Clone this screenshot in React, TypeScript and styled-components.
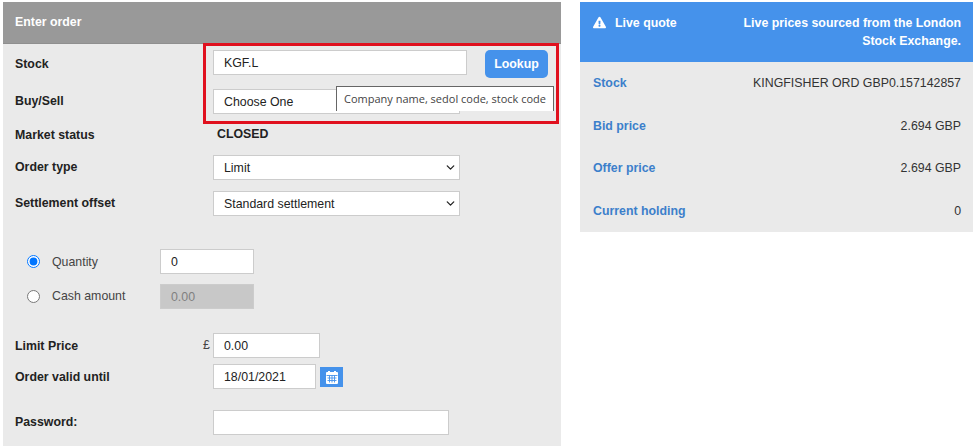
import React from "react";
import styled, { createGlobalStyle } from "styled-components";
import { ChevronDown } from "lucide-react";
import { FaExclamationTriangle } from "react-icons/fa";

const GlobalStyle = createGlobalStyle`
    html, body {
        margin: 0;
        padding: 0;
        background: #fff;
        font-family: "Liberation Sans", Arial, sans-serif;
    }
`;

const quoteRows = [
    { label: "Stock", value: "KINGFISHER ORD GBP0.157142857" },
    { label: "Bid price", value: "2.694 GBP" },
    { label: "Offer price", value: "2.694 GBP" },
    { label: "Current holding", value: "0" },
];

function CalendarIcon() {
    return (
        <svg width="14" height="15" viewBox="0 0 14 15" aria-hidden="true">
            <path d="M2 2h1V1h2v1h4V1h2v1h1a1 1 0 0 1 1 1v10a1 1 0 0 1-1 1H2a1 1 0 0 1-1-1V3a1 1 0 0 1 1-1z" fill="#fff" />
            <path d="M1.5 5.5h11M2.5 8h9M2.5 10.5h9M4.5 5.5v7M7 5.5v7M9.5 5.5v7" stroke="#4592eb" strokeWidth="0.9" fill="none" />
        </svg>
    );
}

function SelectField({ value }: { value: string }) {
    return (
        <SelectBox>
            <Select>
                <option>{value}</option>
            </Select>
            <SelectArrow size={13} strokeWidth={2.4} />
        </SelectBox>
    );
}

export default function App() {
    return (
        <Page>
            <GlobalStyle />
            <OrderPanel>
                <OrderHeader>Enter order</OrderHeader>
                <OrderBody>
                    <Row $top={6} $height={28}>
                        <Label $offset={7}>Stock</Label>
                        <TextInput $width={254} defaultValue="KGF.L" />
                        <LookupButton>Lookup</LookupButton>
                    </Row>
                    <Row $top={11} $height={25}>
                        <Label>Buy/Sell</Label>
                        <SelectField value="Choose One" />
                    </Row>
                    <Row $top={12} $height={16}>
                        <Label $offset={2}>Market status</Label>
                        <StatusText>CLOSED</StatusText>
                    </Row>
                    <Row $top={13} $height={25}>
                        <Label>Order type</Label>
                        <SelectField value="Limit" />
                    </Row>
                    <Row $top={11} $height={25}>
                        <Label>Settlement offset</Label>
                        <SelectField value="Standard settlement" />
                    </Row>

                    <RadioRow $top={33}>
                        <Radio name="amount" defaultChecked />
                        <RadioLabel>Quantity</RadioLabel>
                        <TextInput $width={94} defaultValue="0" />
                    </RadioRow>
                    <RadioRow $top={10}>
                        <Radio name="amount" />
                        <RadioLabel $raise>Cash amount</RadioLabel>
                        <TextInput $width={94} defaultValue="0.00" disabled />
                    </RadioRow>

                    <Row $top={24} $height={25}>
                        <Label $offset={6}>Limit Price</Label>
                        <Currency>£</Currency>
                        <TextInput $width={107} defaultValue="0.00" />
                    </Row>
                    <Row $top={6} $height={25}>
                        <Label $offset={6}>Order valid until</Label>
                        <TextInput $width={103} defaultValue="18/01/2021" />
                        <CalendarButton>
                            <CalendarIcon />
                        </CalendarButton>
                    </Row>
                    <Row $top={21} $height={25}>
                        <Label>Password:</Label>
                        <TextInput $width={236} type="password" />
                    </Row>
                </OrderBody>
                <Highlight />
                <Tooltip>Company name, sedol code, stock code</Tooltip>
            </OrderPanel>

            <QuotePanel>
                <QuoteHeader>
                    <QuoteTitle>
                        <FaExclamationTriangle size={13} />
                        Live quote
                    </QuoteTitle>
                    <QuoteNote>Live prices sourced from the London Stock Exchange.</QuoteNote>
                </QuoteHeader>
                {quoteRows.map((row) => (
                    <QuoteRow key={row.label}>
                        <QuoteLabel>{row.label}</QuoteLabel>
                        <QuoteValue>{row.value}</QuoteValue>
                    </QuoteRow>
                ))}
            </QuotePanel>
        </Page>
    );
}

const Page = styled.div`
    display: flex;
    align-items: flex-start;
    gap: 19px;
    box-sizing: border-box;
    width: 980px;
    height: 446px;
    padding: 2px 0 0 3px;
    overflow: hidden;
    font-size: 12.35px;
    color: #222;
`;

const OrderPanel = styled.section`
    position: relative;
    width: 558px;
    height: 444px;
    background: #eaeaea;
`;

const OrderHeader = styled.h2`
    box-sizing: border-box;
    height: 42px;
    margin: 0;
    padding: 0 12px;
    background: #999;
    border-bottom: 1px solid #8f8f8f;
    color: #fff;
    font-size: 12.35px;
    font-weight: 700;
    line-height: 41px;
`;

const OrderBody = styled.div`
    display: flex;
    flex-direction: column;
    padding-left: 12px;
`;

const Row = styled.div<{ $top: number; $height: number }>`
    display: flex;
    align-items: flex-start;
    height: ${({ $height }) => $height}px;
    margin-top: ${({ $top }) => $top}px;
`;

const Label = styled.label<{ $offset?: number }>`
    width: 198px;
    flex: none;
    font-weight: 700;
    line-height: 14px;
    padding-top: ${({ $offset }) => $offset ?? 5}px;
    color: #222;
`;

const TextInput = styled.input<{ $width: number }>`
    box-sizing: border-box;
    width: ${({ $width }) => $width}px;
    height: 25px;
    padding: 0 10px;
    border: 1px solid #ccc;
    border-radius: 0;
    outline: none;
    background: #fff;
    color: #222;
    font: 12.35px "Liberation Sans", Arial, sans-serif;

    &:disabled {
        background: #c8c8c8;
        color: #808080;
    }
`;

const SelectBox = styled.div`
    position: relative;
    width: 247px;
    height: 25px;
`;

const Select = styled.select`
    box-sizing: border-box;
    width: 100%;
    height: 25px;
    padding: 0 10px;
    border: 1px solid #ccc;
    border-radius: 0;
    appearance: none;
    background: #fff;
    color: #222;
    font: 12.35px "Liberation Sans", Arial, sans-serif;
`;

const SelectArrow = styled(ChevronDown)`
    position: absolute;
    right: 3px;
    top: 6px;
    color: #222;
    pointer-events: none;
`;

const LookupButton = styled.button`
    width: 63px;
    height: 28px;
    margin-left: 18px;
    padding: 0;
    border: none;
    border-radius: 5px;
    background: #4592eb;
    color: #fff;
    font: 700 12.35px "Liberation Sans", Arial, sans-serif;
`;

const StatusText = styled.span`
    padding-left: 4px;
    font-weight: 700;
    line-height: 14px;
    padding-top: 1px;
`;

const RadioRow = styled.div<{ $top: number }>`
    display: flex;
    align-items: center;
    height: 25px;
    margin-top: ${({ $top }) => $top}px;
    padding-left: 12px;
`;

const Radio = styled.input.attrs({ type: "radio" })`
    width: 13px;
    height: 13px;
    margin: 0 12px 0 0;
    accent-color: #0075ff;
`;

const RadioLabel = styled.span<{ $raise?: boolean }>`
    width: 108px;
    margin-bottom: ${({ $raise }) => ($raise ? 2 : 0)}px;
    color: #444;
`;

const Currency = styled.span`
    width: 10px;
    margin-left: -10px;
    line-height: 25px;
    color: #444;
`;

const CalendarButton = styled.span`
    display: flex;
    align-items: center;
    justify-content: center;
    width: 23px;
    height: 20px;
    margin: 3px 0 0 4px;
    background: #4592eb;
`;

const Highlight = styled.div`
    position: absolute;
    left: 200px;
    top: 41px;
    box-sizing: border-box;
    width: 356px;
    height: 81px;
    border: 3px solid #e0101e;
    pointer-events: none;
`;

const Tooltip = styled.div`
    position: absolute;
    left: 333px;
    top: 84px;
    box-sizing: border-box;
    width: 218px;
    height: 25px;
    border: 1px solid #666;
    border-bottom: none;
    background: #fff;
    color: #444;
    font: 11px/24px "Open Sans", sans-serif;
    text-align: center;
    white-space: nowrap;
`;

const QuotePanel = styled.section`
    width: 393px;
    height: 230px;
    background: #eaeaea;
`;

const QuoteHeader = styled.header`
    display: flex;
    justify-content: space-between;
    box-sizing: border-box;
    height: 60px;
    padding: 12px 12px 0 13px;
    background: #4592eb;
    color: #fff;
    font-weight: 700;
    line-height: 18px;
`;

const QuoteTitle = styled.div`
    display: flex;
    align-items: flex-start;
    gap: 9px;
    white-space: nowrap;

    svg {
        margin-top: 2px;
    }
`;

const QuoteNote = styled.div`
    width: 240px;
    text-align: right;
`;

const QuoteRow = styled.div`
    display: flex;
    justify-content: space-between;
    align-items: center;
    height: 42.5px;
    padding: 0 12px 0 13px;
`;

const QuoteLabel = styled.span`
    font-weight: 700;
    color: #3c7fcb;
`;

const QuoteValue = styled.span`
    color: #333;
`;
